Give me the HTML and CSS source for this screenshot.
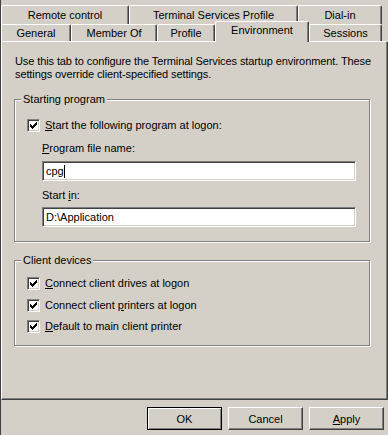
FILE: index.html
```html
<!DOCTYPE html>
<html lang="en">
<head>
  <meta charset="UTF-8">
  <title>User Properties - Environment</title>
  <link rel="stylesheet" href="styles.css">
</head>
<body>
  <div class="dialog">

    <!-- Tab strip, two rows -->
    <div class="tabs">
      <div class="tab-row">
        <div class="tab tab-remote">Remote control</div>
        <div class="tab tab-tsp">Terminal Services Profile</div>
        <div class="tab tab-dial">Dial-in</div>
      </div>
      <div class="tab-row">
        <div class="tab tab-general">General</div>
        <div class="tab tab-member">Member Of</div>
        <div class="tab tab-profile">Profile</div>
        <div class="tab tab-env active">Environment</div>
        <div class="tab tab-sessions">Sessions</div>
      </div>
    </div>

    <!-- Environment page -->
    <div class="page">
      <p class="intro">Use this tab to configure the Terminal Services startup environment. These settings override client-specified settings.</p>

      <div class="group group-start">
        <span class="group-label">Starting program</span>
        <div class="check first">
          <span class="box">
            <svg width="7" height="7" viewBox="0 0 7 7"><path d="M0 2h1v3H0zM1 3h1v3H1zM2 4h1v3H2zM3 3h1v3H3zM4 2h1v3H4zM5 1h1v3H5zM6 0h1v3H6z" fill="#000"/></svg>
          </span>
          <span><u>S</u>tart the following program at logon:</span>
        </div>
        <div class="field-label label-program"><u>P</u>rogram file name:</div>
        <div class="edit">cpg<span class="caret"></span></div>
        <div class="field-label label-start">Start <u>i</u>n:</div>
        <div class="edit edit-start">D:\Application</div>
      </div>

      <div class="group group-devices">
        <span class="group-label">Client devices</span>
        <div class="check first">
          <span class="box">
            <svg width="7" height="7" viewBox="0 0 7 7"><path d="M0 2h1v3H0zM1 3h1v3H1zM2 4h1v3H2zM3 3h1v3H3zM4 2h1v3H4zM5 1h1v3H5zM6 0h1v3H6z" fill="#000"/></svg>
          </span>
          <span><u>C</u>onnect client drives at logon</span>
        </div>
        <div class="check second">
          <span class="box">
            <svg width="7" height="7" viewBox="0 0 7 7"><path d="M0 2h1v3H0zM1 3h1v3H1zM2 4h1v3H2zM3 3h1v3H3zM4 2h1v3H4zM5 1h1v3H5zM6 0h1v3H6z" fill="#000"/></svg>
          </span>
          <span>Connect client <u>p</u>rinters at logon</span>
        </div>
        <div class="check third">
          <span class="box">
            <svg width="7" height="7" viewBox="0 0 7 7"><path d="M0 2h1v3H0zM1 3h1v3H1zM2 4h1v3H2zM3 3h1v3H3zM4 2h1v3H4zM5 1h1v3H5zM6 0h1v3H6z" fill="#000"/></svg>
          </span>
          <span><u>D</u>efault to main client printer</span>
        </div>
      </div>
    </div>

    <!-- Dialog buttons -->
    <div class="buttons">
      <button class="btn default">OK</button>
      <button class="btn">Cancel</button>
      <button class="btn"><u>A</u>pply</button>
    </div>
  </div>
</body>
</html>
```

FILE: styles.css
```css
body {
  margin: 0;
  padding: 0;
  background-color: #d4d0c8;
  font-family: "Liberation Sans", Arial, sans-serif;
  font-size: 11px;
  color: #000000;
}

.dialog {
  width: 388px;
  height: 435px;
  box-sizing: border-box;
  border-left: 1px solid #404040;
  overflow: hidden;
}

/* Tabs */
.tabs {
  padding-top: 5px;
}

.tab-row {
  display: flex;
}

.tab {
  box-sizing: border-box;
  height: 19px;
  line-height: 18px;
  text-align: center;
  white-space: nowrap;
  border-top: 1px solid #ffffff;
  border-left: 1px solid #ffffff;
  border-right: 1px solid #404040;
  border-radius: 2px 2px 0 0;
  box-shadow: inset -1px 0 0 #808080;
}

.tab-row + .tab-row .tab {
  height: 17px;
  line-height: 16px;
}

.tab-remote { width: 128px; }
.tab-tsp { width: 169px; }
.tab-dial { width: 84px; }
.tab-general { width: 70px; }
.tab-member { width: 86px; }
.tab-profile { width: 58px; }
.tab-env { width: 94px; }
.tab-sessions { width: 73px; }

.tab-row + .tab-row .tab.active {
  position: relative;
  z-index: 1;
  height: 21px;
  line-height: 17px;
  margin-top: -3px;
  margin-bottom: -1px;
  background-color: #d4d0c8;
}

/* Page panel */
.page {
  box-sizing: border-box;
  height: 359px;
  padding: 13px 12px 0 12px;
  border: 1px solid;
  border-color: #ffffff #404040 #404040 #ffffff;
  box-shadow: inset -1px -1px 0 #808080;
}

.intro {
  margin: 0 -8px 0 1px;
  line-height: 13px;
  letter-spacing: -0.1px;
}

/* Group boxes */
.group {
  box-sizing: border-box;
  width: 356px;
  border: 1px solid #808080;
  box-shadow: inset 1px 1px 0 #ffffff, 1px 1px 0 #ffffff;
}

.group-start {
  margin-top: 18px;
  padding-bottom: 14px;
}

.group-devices {
  margin-top: 18px;
  padding-bottom: 12px;
}

.group-label {
  display: block;
  width: max-content;
  height: 13px;
  line-height: 13px;
  margin: -7px 0 0 6px;
  padding: 0 2px;
  background-color: #d4d0c8;
}

/* Checkboxes */
.check {
  display: flex;
  align-items: center;
  height: 13px;
  line-height: 13px;
  margin-left: 12px;
}

.check.first { margin-top: 13px; }
.group-devices .check.first { margin-top: 10px; }
.check.second { margin-top: 9px; }
.check.third { margin-top: 8px; }

.box {
  box-sizing: border-box;
  width: 13px;
  height: 13px;
  margin-right: 5px;
  display: flex;
  align-items: center;
  justify-content: center;
  background-color: #ffffff;
  border-top: 1px solid #808080;
  border-left: 1px solid #808080;
  border-bottom: 1px solid #ffffff;
  border-right: 1px solid #ffffff;
  box-shadow: inset 1px 1px 0 #404040, inset -1px -1px 0 #d4d0c8;
}

.box svg {
  display: block;
  shape-rendering: crispEdges;
}

/* Text fields */
.field-label {
  height: 13px;
  line-height: 13px;
  margin-left: 27px;
}

.label-program { margin-top: 10px; }
.label-start { margin-top: 8px; }

.edit {
  box-sizing: border-box;
  width: 314px;
  height: 20px;
  margin: 6px 0 0 27px;
  padding: 0 3px;
  line-height: 18px;
  background-color: #ffffff;
  border-top: 1px solid #808080;
  border-left: 1px solid #808080;
  border-bottom: 1px solid #ffffff;
  border-right: 1px solid #ffffff;
  box-shadow: inset 1px 1px 0 #404040, inset -1px -1px 0 #d4d0c8;
}

.edit-start {
  margin-top: 5px;
}

.caret {
  display: inline-block;
  width: 1px;
  height: 13px;
  vertical-align: -3px;
  background-color: #000000;
}

/* Buttons */
.buttons {
  display: flex;
  justify-content: flex-end;
  gap: 6px;
  padding: 7px 4px 0 0;
}

.btn {
  box-sizing: border-box;
  width: 75px;
  height: 23px;
  padding: 0;
  font-family: inherit;
  font-size: 11px;
  color: #000000;
  background-color: #d4d0c8;
  border: 1px solid;
  border-color: #ffffff #404040 #404040 #ffffff;
  border-radius: 0;
  box-shadow: inset -1px -1px 0 #808080;
}

.btn.default {
  border-color: #000000;
  box-shadow: inset 1px 1px 0 #ffffff, inset -1px -1px 0 #808080;
}
```
